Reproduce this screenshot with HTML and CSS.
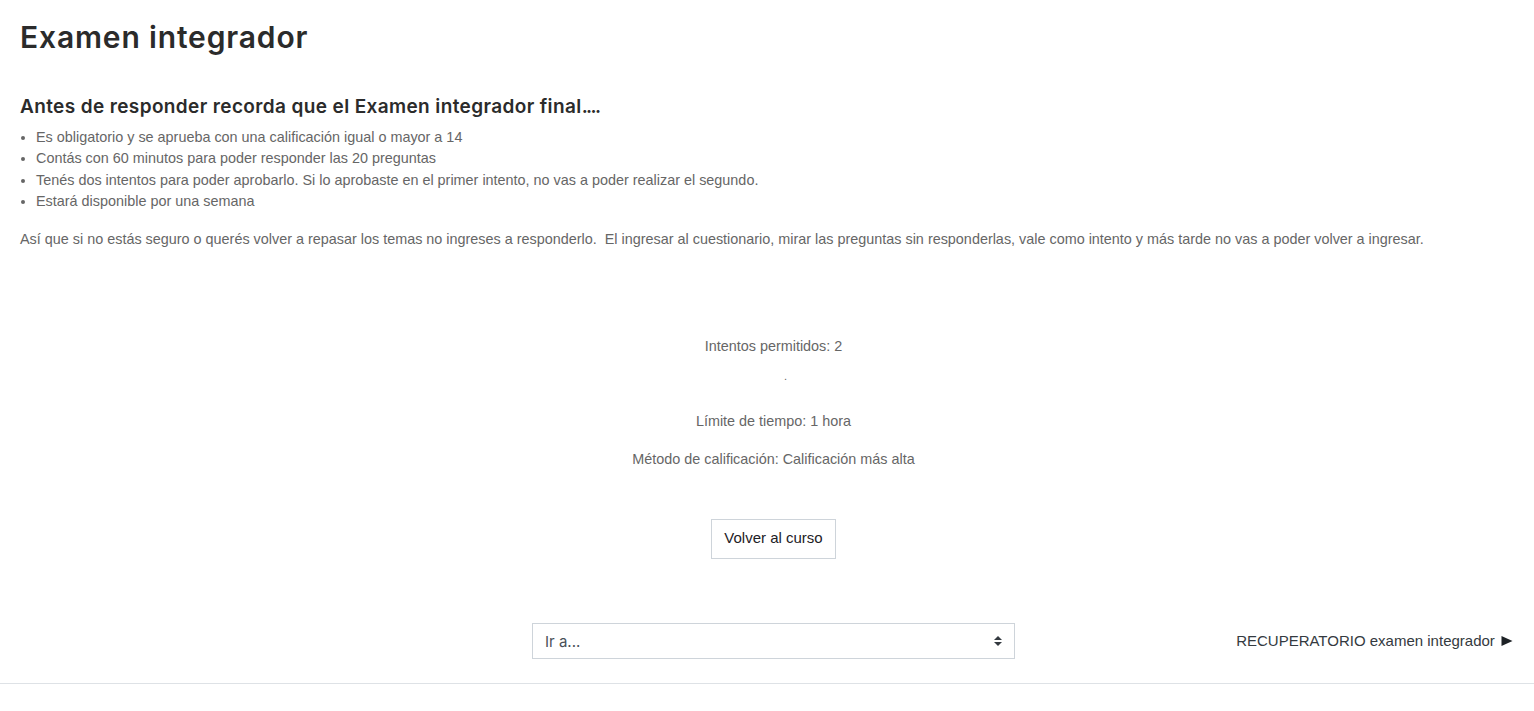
FILE: index.html
```html
<!DOCTYPE html>
<html lang="es">
<head>
<meta charset="utf-8">
<title>Examen integrador</title>
<link rel="stylesheet" href="styles.css">
</head>
<body>
<main class="page">
  <h1 class="title">Examen integrador</h1>
  <section class="intro">
    <h2 class="subtitle">Antes de responder recorda que el Examen integrador final<span class="ellipsis">....</span></h2>
    <ul class="rules">
      <li>Es obligatorio y se aprueba con una calificación igual o mayor a 14</li>
      <li>Contás con 60 minutos para poder responder las 20 preguntas</li>
      <li>Tenés dos intentos para poder aprobarlo. Si lo aprobaste en el primer intento, no vas a poder realizar el segundo.</li>
      <li>Estará disponible por una semana</li>
    </ul>
    <p class="notice">Así que si no estás seguro o querés volver a repasar los temas no ingreses a responderlo.&nbsp; El ingresar al cuestionario, mirar las preguntas sin responderlas, vale como intento y más tarde no vas a poder volver a ingresar.</p>
  </section>
  <section class="quiz-info">
    <p>Intentos permitidos: 2</p>
    <p class="dot">.</p>
    <p>Límite de tiempo: 1 hora</p>
    <p>Método de calificación: Calificación más alta</p>
    <button class="back" type="button">Volver al curso</button>
  </section>
  <nav class="activity-nav">
    <div class="jump"><span>Ir a...</span>
      <svg class="arrows" width="8" height="10" viewBox="0 0 4 5"><path fill="#343a40" d="M2 0L0 2h4zm0 5L0 3h4z"/></svg>
    </div>
    <a class="next">RECUPERATORIO examen integrador <svg class="forward" width="12" height="10" viewBox="0 0 12 10"><path fill="#1d2125" d="M.5 0v10L11.5 5z"/></svg></a>
  </nav>
</main>
</body>
</html>
```
FILE: styles.css
```css
* { box-sizing: border-box; }
body {
  margin: 0;
  background: #fff;
  color: #666;
  font: 14.4px/21.6px "Liberation Sans", Arial, sans-serif;
}
.title, .subtitle {
  margin: 0;
  color: #2b2b2b;
  font-family: Inter, "Open Sans", sans-serif;
  font-weight: 600;
  white-space: nowrap;
}
.page {
  height: 684px;
  padding: 20px 20px 0;
  border-bottom: 1px solid #dee2e6;
}
.title {
  font-size: 30px;
  line-height: 35px;
  letter-spacing: 0.85px;
}
.intro { padding-top: 40px; }
.subtitle {
  font-size: 19px;
  line-height: 23px;
  letter-spacing: 0.38px;
}
.ellipsis { letter-spacing: -1.6px; }
.rules {
  margin: 8.85px 0 16px;
  padding-left: 16px;
}
.rules li { line-height: 21.4px; }
.notice { margin: 16.95px 0 0; }
.quiz-info {
  display: flex;
  flex-direction: column;
  align-items: center;
  padding: 85px 0 0 13px;
}
.quiz-info p { margin: 0 0 16px; }
.quiz-info .dot {
  margin-bottom: 33.6px;
  padding-left: 24px;
  font-size: 11px;
  line-height: 4px;
}
.back {
  height: 40px;
  width: 125px;
  margin-top: 33px;
  padding: 0 0 3px;
  border: 1px solid #ced4da;
  background: #fff;
  color: #1d2125;
  font: 15px "Liberation Sans", Arial, sans-serif;
}
.activity-nav {
  display: grid;
  grid-template-columns: 512px 483px 1fr;
  padding-top: 64px;
}
.jump {
  grid-column: 2;
  display: flex;
  align-items: center;
  justify-content: space-between;
  height: 36px;
  padding: 0 12px;
  border: 1px solid #ced4da;
  color: #495057;
  font: 15px Inter, sans-serif;
}
.next {
  justify-self: end;
  margin-right: 1px;
  color: #343a40;
  font-size: 15px;
  line-height: 36px;
  white-space: nowrap;
}
.forward { margin-left: 2px; }
```
